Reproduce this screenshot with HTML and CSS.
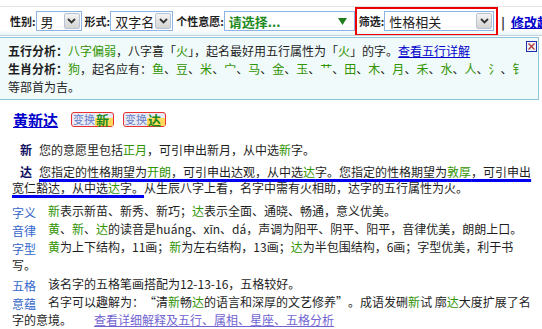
FILE: index.html
```html
<!DOCTYPE html>
<html lang="zh-CN">
<head>
    <meta charset="UTF-8">
    <title>起名结果 - 黄新达</title>
    <link rel="stylesheet" href="styles.css">
</head>
<body>
    <div class="topbar">
        <span class="lbl">性别:</span>
        <span class="sel sel-sex">男<span class="arr"><svg width="9" height="6" viewBox="0 0 9 6"><path d="M1 1l3.5 3.5L8 1" fill="none" stroke="#333" stroke-width="1.8"/></svg></span></span>
        <span class="lbl">形式:</span>
        <span class="sel sel-form">双字名<span class="arr"><svg width="9" height="6" viewBox="0 0 9 6"><path d="M1 1l3.5 3.5L8 1" fill="none" stroke="#333" stroke-width="1.8"/></svg></span></span>
        <span class="lbl">个性意愿:</span>
        <span class="sel sel-wish">请选择...<svg class="tri" width="9" height="7" viewBox="0 0 9 7"><path d="M0 0h9L4.5 7z" fill="#1f7f1f"/></svg></span>
        <div class="filter">
            <span class="lbl">筛选:</span>
            <span class="sel sel-filter">性格相关<span class="arr"><svg width="9" height="6" viewBox="0 0 9 6"><path d="M1 1l3.5 3.5L8 1" fill="none" stroke="#333" stroke-width="1.8"/></svg></span></span>
        </div>
        <span class="sep">|</span>
        <a class="edit" href="#">修改起名条件</a>
    </div>

    <div class="info">
        <span class="close"><svg width="11" height="11" viewBox="0 0 11 11"><rect x=".5" y=".5" width="10" height="10" fill="#f2f2f2" stroke="#1c2fb0"/><path d="M2.5 2.5l6 6M8.5 2.5l-6 6" stroke="#b03a3a" stroke-width="1.3"/></svg></span>
        <div><b>五行分析：</b><em>八字偏弱</em>，八字喜「<em>火</em>」，起名最好用五行属性为「<em>火</em>」的字。<a href="#">查看五行详解</a></div>
        <div class="clip"><b>生肖分析：</b><em>狗</em>，起名应有：<em>鱼</em>、<em>豆</em>、<em>米</em>、<em>宀</em>、<em>马</em>、<em>金</em>、<em>玉</em>、<em>艹</em>、<em>田</em>、<em>木</em>、<em>月</em>、<em>禾</em>、<em>水</em>、<em>人</em>、<em>氵</em>、<em>钅</em></div>
        <div>等部首为吉。</div>
    </div>

    <div class="result">
        <div class="name-row">
            <a class="name" href="#">黄新达</a>
            <span class="swap"><span class="swap-lbl">变换</span><b>新</b></span>
            <span class="swap"><span class="swap-lbl">变换</span><b>达</b></span>
        </div>

        <p class="char-row"><b class="ch">新</b>您的意愿里包括<em>正月</em>，可引申出新月，从中选<em>新</em>字。</p>
        <p class="char-row"><b class="ch">达</b><span class="hl">您指定的性格期望为<em>开朗</em>，可引申出达观，从中选<em>达</em>字。您指定的性格期望为<em>敦厚</em>，可引申出宽仁豁达，从中选<em>达</em>字。</span>从生辰八字上看，名字中需有火相助，达字的五行属性为火。</p>

        <div class="detail"><span class="tag">字义</span><em>新</em>表示新苗、新秀、新巧；<em>达</em>表示全面、通晓、畅通，意义优美。</div>
        <div class="detail"><span class="tag">音律</span><em>黄</em>、<em>新</em>、<em>达</em>的读音是huáng、xīn、dá，声调为阳平、阴平、阳平，音律优美，朗朗上口。</div>
        <div class="detail"><span class="tag">字型</span><em>黄</em>为上下结构，11画；<em>新</em>为左右结构，13画；<em>达</em>为半包围结构，6画；字型优美，利于书写。</div>
        <div class="detail gap"><span class="tag">五格</span>该名字的五格笔画搭配为12-13-16，五格较好。</div>
        <div class="detail"><span class="tag">意蕴</span>名字可以趣解为：<span class="q q-open">“</span>清<em>新</em>畅<em>达</em>的语言和深厚的文艺修养<span class="q">”</span>。成语发硎<em>新</em>试 廓<em>达</em>大度扩展了名字的意境。<a class="more" href="#">查看详细解释及五行、属相、星座、五格分析</a></div>
    </div>
</body>
</html>
```

FILE: styles.css
```css
body {
    margin: 0;
    width: 542px;
    overflow: hidden;
    font-family: "Noto Sans CJK SC", sans-serif;
    font-size: 12px;
    color: #1e1e1e;
    background: #fff;
}
em {
    font-style: normal;
    color: #2f9400;
}
a {
    color: #0000cc;
}

/* top condition bar */
.topbar {
    display: flex;
    align-items: center;
    height: 28px;
    margin-top: 6px;
    padding-left: 10px;
    border-top: 1px solid #e3e3e3;
    border-bottom: 1px solid #c8d2d6;
    background: linear-gradient(#fff 82%, #e4f4f6);
    white-space: nowrap;
    overflow: hidden;
}
.topbar > * {
    flex-shrink: 0;
}
.lbl {
    font-size: 11px;
    font-weight: bold;
}
.sel {
    display: inline-flex;
    align-items: center;
    box-sizing: border-box;
    height: 20px;
    padding-left: 4px;
    margin-right: 3px;
    border: 1px solid #8db4e6;
    background: #fff;
    font-size: 13px;
}
.sel-sex { width: 46px; }
.sel-form { width: 63px; }
.sel-wish {
    width: 131px;
    margin-right: 0;
    color: #1e8a1e;
    font-weight: bold;
}
.sel-filter { width: 110px; margin-right: 0; }
.arr {
    display: flex;
    align-items: center;
    justify-content: center;
    box-sizing: border-box;
    width: 16px;
    height: 16px;
    margin-left: auto;
    margin-right: 1px;
    border: 1px solid #b9c3d3;
    border-radius: 2px;
    background: linear-gradient(#f4f4f4, #d3d3d3);
}
.tri {
    margin-left: auto;
    margin-right: 7px;
}
.filter {
    display: flex;
    align-items: center;
    box-sizing: border-box;
    height: 29px;
    padding: 0 2px;
    border: 2px solid #ee0000;
}
.sep {
    margin: 0 6px 0 3px;
    font-weight: bold;
}
.edit {
    font-weight: bold;
    font-size: 13px;
}

/* analysis box */
.info {
    position: relative;
    box-sizing: border-box;
    width: 539px;
    margin-top: 1px;
    padding: 4px 0 3px 8px;
    border: 1px solid #8fc6dc;
    border-left: 0;
    background: #f1fafa;
    line-height: 18px;
}
.clip {
    width: 511px;
    overflow: hidden;
    white-space: nowrap;
}
.close {
    position: absolute;
    top: 3px;
    right: 1px;
    line-height: 0;
}

/* name result */
.result {
    width: 521px;
    padding: 0 12px;
}
.name-row {
    display: flex;
    align-items: center;
    height: 20px;
    margin-top: 9px;
}
.name {
    margin-left: 1px;
    margin-right: 13px;
    font-size: 15px;
    font-weight: bold;
}
.swap {
    display: inline-flex;
    align-items: flex-end;
    box-sizing: border-box;
    width: 43px;
    height: 15px;
    margin-right: 9px;
    padding-left: 1px;
    border: 1px solid #e83030;
    border-radius: 3px;
    background: #e9ebf4;
}
.swap-lbl {
    align-self: flex-start;
    font-size: 11px;
    line-height: 12px;
    color: #6a7fc8;
}
.swap b {
    flex: 1;
    padding-left: 1px;
    font-size: 13px;
    line-height: 12px;
    color: #1e8a1e;
    background: linear-gradient(transparent 30%, #ffd95c 30%);
}
.char-row {
    margin: 0;
    line-height: 16px;
}
.char-row + .char-row {
    margin-top: 6px;
}
.name-row + .char-row {
    margin-top: 13px;
}
.ch {
    margin: 0 7px 0 8px;
    color: #101060;
}
.hl {
    text-decoration: underline 3px #0000ee;
    text-underline-offset: 2px;
}
.detail {
    line-height: 18px;
}
.char-row + .detail {
    margin-top: 6px;
}
.gap {
    margin-top: 1px;
}
.tag {
    float: left;
    width: 36px;
    padding-top: 3px;
    line-height: 15px;
    color: #3366cc;
}
.q {
    display: inline-block;
    width: 12px;
}
.q-open {
    text-align: right;
}
.more {
    margin-left: 22px;
    color: #7164d2;
}
```
